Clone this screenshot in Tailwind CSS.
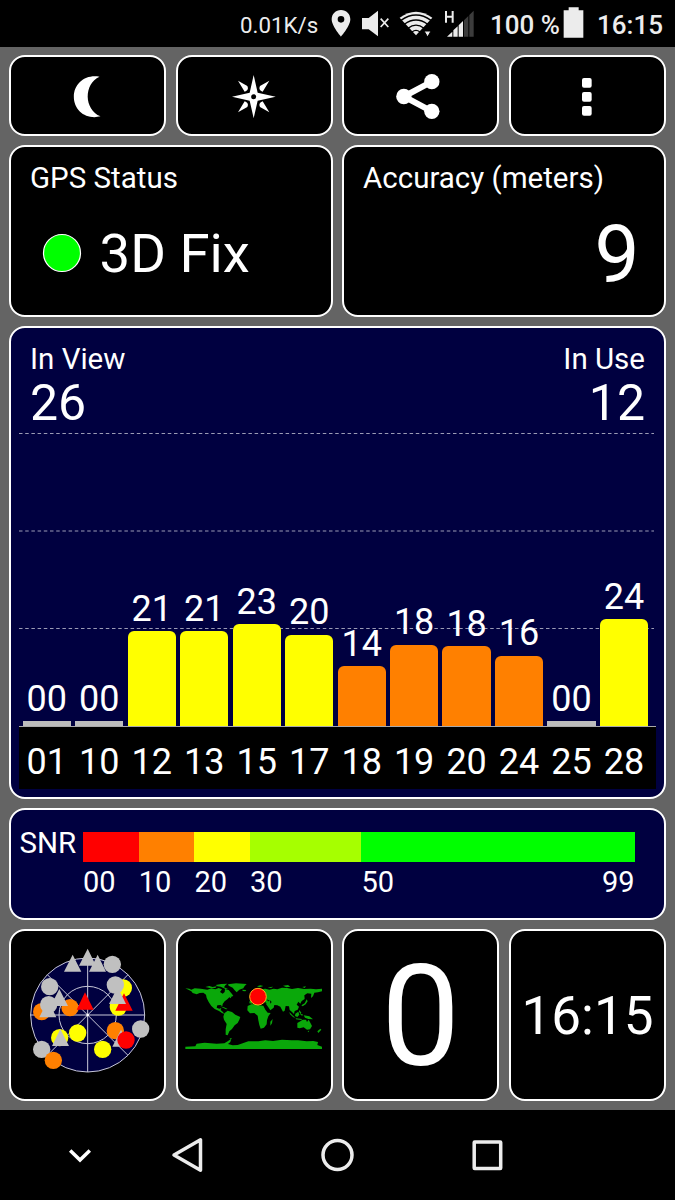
<!DOCTYPE html>
<html lang="en">
<head>
<meta charset="utf-8">
<title>GPS Test</title>
<script src="https://cdn.jsdelivr.net/npm/@tailwindcss/browser@4"></script>
</head>
<body class="bg-black">
<div class="w-[675px] h-[1200px] flex flex-col overflow-hidden bg-[#646464] text-white font-['Roboto',sans-serif] leading-none">

  <!-- status bar -->
  <header class="h-[47px] shrink-0 bg-black flex items-start text-[#ececec] whitespace-nowrap">
    <div id="speed" class="ml-[240px] w-[85px] pt-[14px] text-[22.3px]"><span>0.01K/s</span></div>
    <svg class="w-[30px] h-[47px]" viewBox="300 0 90 141"><path fill="#ececec" fill-rule="evenodd" d="M348 30C332 30 320 42 320 58C320 78 348 110 348 110S376 78 376 58C376 42 364 30 348 30ZM348 48A10 10 0 1 1 348 68A10 10 0 1 1 348 48Z"/></svg>
    <svg class="w-[40px] h-[47px]" viewBox="390 0 120 141"><path fill="#ececec" d="M411 54H431L459 32V109L431 88H411Z"/><path stroke="#ececec" stroke-width="5" fill="none" d="M467 56L490 81M490 56L467 81"/></svg>
    <svg class="w-[45px] h-[47px]" viewBox="510 0 135 141"><path fill="#ececec" d="M524 53Q573 17 622 53L573 106Z"/><g fill="none" stroke="#000" stroke-width="4"><path d="M528 61Q573 29 618 61M538 73Q573 47 608 73M549 85Q573 66 597 85M561 96Q573 86 585 96"/></g><path fill="#ececec" stroke="#000" stroke-width="3" d="M597 93H618L608 111Z"/></svg>
    <svg class="w-[45px] h-[47px]" viewBox="30 0 135 141"><path fill="none" stroke="#ececec" stroke-width="6" d="M48 33V68M68 33V68M48 50H68"/><path fill="#ececec" d="M51 110L67 95V110ZM70 110V91L83 79V110ZM86 110V76L99 63V110Z"/><path fill="#3c3c3c" d="M102 110V61L115 48V110ZM118 110V45L131 32V110Z"/></svg>
    <div id="pct" class="ml-[5px] w-[73px] pt-[12px] text-[26px] font-medium"><span>100 %</span></div>
    <svg class="w-[21px] h-[47px]" viewBox="400 0 63 141"><path fill="#ececec" d="M402 31H417V22H447V31H461V113H402Z"/></svg>
    <div id="clock" class="ml-[13px] pt-[12px] text-[26px] font-medium"><span>16:15</span></div>
  </header>

  <main class="flex flex-col gap-[9px] pt-[8.300px] pl-[9px] w-[665.5px] h-[1063px] shrink-0">
    <!-- toolbar -->
    <div class="grid grid-cols-4 gap-[9.5px] h-[81px] shrink-0">
      <button class="bg-black border-[2.5px] border-white rounded-[16px] flex items-center justify-center"><svg class="w-[50px] h-[50px]" viewBox="187.5 77 150 150"><path fill="#fff" d="M297 94C256 86 220 113 220 154C220 196 258 224 300 213C250 192 249 116 297 94Z"/></svg></button>
      <button class="bg-black border-[2.5px] border-white rounded-[16px] flex items-center justify-center"><svg class="w-[50px] h-[50px]" viewBox="687 77 150 150"><path fill="#fff" d="M761 89L773 142L827 154L773 166L761 219L749 166L696 154L749 142ZM714 106L742 122Q748 134 734 139ZM808 106L780 122Q774 134 788 139ZM714 201L742 185Q748 173 734 168ZM808 201L780 185Q774 173 788 168Z"/><circle cx="761" cy="154" r="7.5"/></svg></button>
      <button class="bg-black border-[2.5px] border-white rounded-[16px] flex items-center justify-center"><svg class="w-[50px] h-[50px]" viewBox="181.5 77 150 150"><path stroke="#fff" stroke-width="18" fill="none" d="M289 109L205 153.500L289 198"/><g fill="#fff"><circle cx="289" cy="109" r="23"/><circle cx="205" cy="153.500" r="23"/><circle cx="289" cy="198" r="23"/></g></svg></button>
      <button class="bg-black border-[2.5px] border-white rounded-[16px] flex items-center justify-center"><svg class="w-[50px] h-[50px]" viewBox="681 77 150 150" fill="#fff"><rect x="741" y="98" width="29" height="29" rx="6"/><rect x="741" y="140" width="29" height="29" rx="6"/><rect x="741" y="182" width="29" height="29" rx="6"/></svg></button>
    </div>

    <!-- fix status and accuracy -->
    <div class="grid grid-cols-2 gap-[9.5px] h-[172px] shrink-0 whitespace-nowrap">
      <section class="bg-black border-[2.5px] border-white rounded-[16px] pl-[19px] pt-[17px]">
        <div id="gps" class="text-[29.5px]"><span>GPS Status</span></div>
        <div class="flex items-center mt-[32px] pl-[12px]">
          <svg class="w-[40px] h-[40px]" viewBox="0 0 40 40"><circle cx="20" cy="20" r="18.500" fill="#0f0" stroke="#fff" stroke-width="1.2"/></svg>
          <div id="fix" class="ml-[17.500px] text-[54.5px]"><span>3D Fix</span></div>
        </div>
      </section>
      <section class="bg-black border-[2.5px] border-white rounded-[16px] pl-[19px] pr-[24px] pt-[17px]">
        <div id="acc" class="text-[29.5px]"><span>Accuracy (meters)</span></div>
        <div id="nine" class="mt-[21px] text-[80px] text-right"><span>9</span></div>
      </section>
    </div>

    <!-- satellite signal chart -->
    <section class="relative bg-[#000040] border-[2.5px] border-white rounded-[16px] h-[473px] shrink-0 flex flex-col px-[8px] whitespace-nowrap">
      <svg class="absolute left-[8px] top-[100px] w-[637px] h-[210px]" viewBox="0 0 637 210"><path stroke="#9b9bb5" stroke-width="1.2" stroke-dasharray="3.5 2.7" d="M0 5.500H635M0 103H635M0 200.500H635"/></svg>
      <div class="flex justify-between pl-[11px] pr-[10.500px] pt-[17px]">
        <div>
          <div id="inview" class="text-[29.5px]"><span>In View</span></div>
          <div id="n26" class="text-[50px] mt-[3px]"><span>26</span></div>
        </div>
        <div class="text-right">
          <div id="inuse" class="text-[29.5px]"><span>In Use</span></div>
          <div id="n12" class="text-[50px] mt-[3px]"><span>12</span></div>
        </div>
      </div>
      <div id="bars" class="relative mt-auto h-[297px] flex items-end gap-[4.2px] pl-[3.600px] text-[36px] text-center"></div>
      <div id="labels" class="h-[63px] w-[637px] bg-black border-t border-[#aaa] flex gap-[4.2px] pl-[3.600px] pt-[17px] mb-[8.500px] text-[36px] text-center"></div>
    </section>

    <!-- SNR legend -->
    <section class="bg-[#000040] border-[2.5px] border-white rounded-[16px] h-[112px] shrink-0 flex pl-[8.500px] pt-[18px] text-[29.5px] whitespace-nowrap">
      <div id="snr" class="w-[63.5px] pt-[0.500px]"><span>SNR</span></div>
      <div class="w-[551.5px] pt-[4px]">
        <div class="flex h-[30px]">
          <div class="w-[55.7px] bg-[#ff0000]"></div><div class="w-[55.7px] bg-[#ff8000]"></div><div class="w-[55.7px] bg-[#ffff00]"></div><div class="w-[111.4px] bg-[#a6ff00]"></div><div class="flex-1 bg-[#00ff00]"></div>
        </div>
        <div id="scale" class="flex mt-[5.500px] text-[29px]">
          <span class="w-[55.7px]">00</span><span class="w-[55.7px]">10</span><span class="w-[55.7px]">20</span><span class="w-[111.4px]">30</span><span class="flex-1">50</span><span>99</span>
        </div>
      </div>
    </section>

    <!-- page tiles -->
    <div class="grid grid-cols-4 gap-[9.5px] h-[172px] shrink-0 whitespace-nowrap">
      <div class="bg-black border-[2.5px] border-white rounded-[16px] flex items-center justify-center">
        <svg class="w-[145px] h-[160px]" viewBox="0 0 435 480">
          <g fill="#000040" stroke="#c8c8d8" stroke-width="3"><circle cx="218" cy="240" r="171"/><circle cx="218" cy="240" r="86" fill="none"/><path d="M46 240H389M218 69V411M97 119L339 361M339 119L97 361"/></g>
          <circle cx="218" cy="240" r="4" fill="#fff"/>
          <g fill="#c0c0c0"><path d="M173 59L199 110H147ZM248 59L273 110H222ZM218 41L243 92H192Z"/><circle cx="292" cy="88" r="26"/></g>
          <circle cx="325" cy="159" r="26" fill="#ff0"/><circle cx="310" cy="216" r="26" fill="#ff0"/>
          <path d="M327 175L353 227H301Z" fill="#f00"/>
          <path d="M308 156L333 207H282Z" fill="#c0c0c0"/><circle cx="301" cy="150" r="26" fill="#c0c0c0"/>
          <circle cx="80" cy="230" r="26" fill="#ff8000"/><circle cx="165" cy="218" r="26" fill="#ff8000"/>
          <g fill="#c0c0c0"><circle cx="104" cy="155" r="26"/><path d="M99 195L124 247H73ZM133 162L159 213H107Z"/><circle cx="101" cy="209" r="26"/></g>
          <path d="M210 172L236 224H185Z" fill="#f00"/>
          <circle cx="188" cy="294" r="26" fill="#ff0"/><circle cx="134" cy="308" r="26" fill="#ff0"/>
          <path d="M136 282L162 333H111Z" fill="#c0c0c0"/><circle cx="80" cy="343" r="26" fill="#c0c0c0"/>
          <circle cx="115" cy="376" r="26" fill="#ff8000"/><circle cx="263" cy="343" r="26" fill="#ff0"/>
          <circle cx="301" cy="287" r="26" fill="#ff8000"/>
          <path d="M318 284L343 335H292Z" fill="#c0c0c0"/><circle cx="333" cy="315" r="26" fill="#f00"/><circle cx="377" cy="282" r="26" fill="#c0c0c0"/>
        </svg>
      </div>
      <div class="bg-black border-[2.5px] border-white rounded-[16px] flex items-center justify-center">
        <svg class="w-[151px] h-[90px]" viewBox="3 0 453 270">
          <g fill="#0aa80a">
            <path d="M22 55L34 56L40 59L50 55L68 56L88 59L100 55L112 58L122 54L132 58L126 66L134 71L140 66L141 57L152 60L162 72L166 78L154 82L148 88L140 94L134 102L133 109L127 105L118 106L116 113L124 116L130 114L128 120L134 125L139 131L133 130L123 123L110 117L100 108L92 96L86 84L84 74L76 68L65 69L56 73L44 69L40 64Z"/>
            <path d="M82 51L94 48L104 51L116 49L112 54L96 54ZM113 45L130 42L148 41L142 46L138 52L150 57L142 57L128 50L118 49ZM150 43L174 40L206 42L200 48L196 55L184 59L176 67L170 61L164 53L152 47ZM125 109L138 112L149 117L144 118L132 112ZM153 80L161 79L158 85ZM193 59L205 60L202 64L194 63Z"/>
            <path d="M139 130L149 122L162 126L172 134L187 141L184 149L179 159L170 166L162 177L154 184L149 196L143 194L143 178L146 162L138 149L136 140Z"/>
            <path d="M209 108L220 103L237 102L243 106L256 107L262 119L269 128L278 129L271 139L267 151L266 163L258 173L248 176L244 165L241 151L239 137L229 129L216 130L208 121ZM277 155L284 147L282 160L277 167Z"/>
            <path d="M215 92L223 86L221 80L214 82L217 72L223 68L226 77L234 74L237 64L249 58L262 56L274 59L287 56L298 58L312 53L328 54L342 57L360 54L378 57L398 56L414 58L432 56V64L420 67L409 68L405 79L399 84L400 71L388 70L379 76L380 87L371 93L367 101L361 95L356 104L363 110L359 119L350 123L348 132L342 126L335 120L333 109L323 108L320 122L315 125L307 110L298 106L289 105L287 113L277 121L270 110L264 102L260 100L252 102L245 94L241 99L235 90L225 93L222 101L214 100Z"/>
            <path d="M370 106L380 100L386 88L389 94L383 103L374 109ZM334 126L345 137L352 143L346 142L336 133ZM352 131L361 125L364 134L358 141L351 138ZM364 120L370 128L368 133L363 125ZM366 133L374 132L373 138ZM353 145L372 147L370 150L354 148ZM377 136L394 139L405 148L391 147L381 143ZM237 49L247 46L256 48L245 52ZM269 52L286 50L279 54ZM315 47L330 45L337 50L325 52ZM373 51L384 49L380 54Z"/>
            <path d="M358 159L367 154L374 149L384 149L387 156L392 149L397 158L402 168L396 178L387 179L377 172L365 175L358 173ZM418 184L427 176L430 179L421 189ZM389 183L394 182L391 187Z"/>
            <path d="M22 237V230L52 229L56 221L80 218L116 221L139 220L149 214L160 206L157 216L150 222L164 226L179 225L194 220L211 214L241 214L262 211L285 213L312 209L341 211L360 211L386 214L406 213L420 216L418 225L432 230V237ZM154 207L159 204L162 207Z"/>
          </g>
          <path d="M243 88L252 98L263 97L266 101L251 102ZM266 88L276 93L270 94ZM276 91L281 96L277 101Z" fill="#000"/>
          <circle cx="240" cy="80" r="25" fill="#f00" stroke="#ffae20" stroke-width="3"/>
        </svg>
      </div>
      <div id="zero" class="bg-black border-[2.5px] border-white rounded-[16px] flex items-center justify-center text-[141px] pt-[3px]"><span>0</span></div>
      <div id="time" class="bg-black border-[2.5px] border-white rounded-[16px] flex items-center justify-center text-[53px] pl-[1px] pt-[2px]"><span>16:15</span></div>
    </div>
  </main>

  <!-- navigation bar -->
  <nav class="grow bg-black">
    <svg class="w-[675px] h-[90px]" viewBox="0 0 675 90" fill="none" stroke="#ececec"><path stroke="#fff" stroke-width="3.500" d="M70.200 40.500L80 50L89.800 40.500"/><path stroke-width="3.500" stroke-linejoin="round" d="M174 45L200.500 29.800V60.200Z"/><circle cx="337.500" cy="45" r="14.500" stroke-width="3.500"/><rect x="474.200" y="32" width="26.500" height="26.500" rx=".5" stroke-width="3.500"/></svg>
  </nav>
</div>
<script>
  const sats = [['01','00',4.5,'bg-[#bdbdbd]'],['10','00',4.5,'bg-[#bdbdbd]'],['12','21',94.5,'bg-[#ffff00] rounded-t-[6px]'],['13','21',94.5,'bg-[#ffff00] rounded-t-[6px]'],['15','23',101.5,'bg-[#ffff00] rounded-t-[6px]'],['17','20',91,'bg-[#ffff00] rounded-t-[6px]'],['18','14',59.5,'bg-[#ff8000] rounded-t-[6px]'],['19','18',81,'bg-[#ff8000] rounded-t-[6px]'],['20','18',79.7,'bg-[#ff8000] rounded-t-[6px]'],['24','16',70.3,'bg-[#ff8000] rounded-t-[6px]'],['25','00',4.5,'bg-[#bdbdbd]'],['28','24',106.5,'bg-[#ffff00] rounded-t-[6px]']];
  document.getElementById('bars').innerHTML = sats.map(s => `<div class="w-[48.3px] shrink-0"><div class="mb-[4.5px]">${s[1]}</div><div class="${s[3]}" style="height:${s[2]}px"></div></div>`).join('');
  document.getElementById('labels').innerHTML = sats.map(s => `<div class="w-[48.3px] shrink-0">${s[0]}</div>`).join('');
</script>
</body>
</html>
